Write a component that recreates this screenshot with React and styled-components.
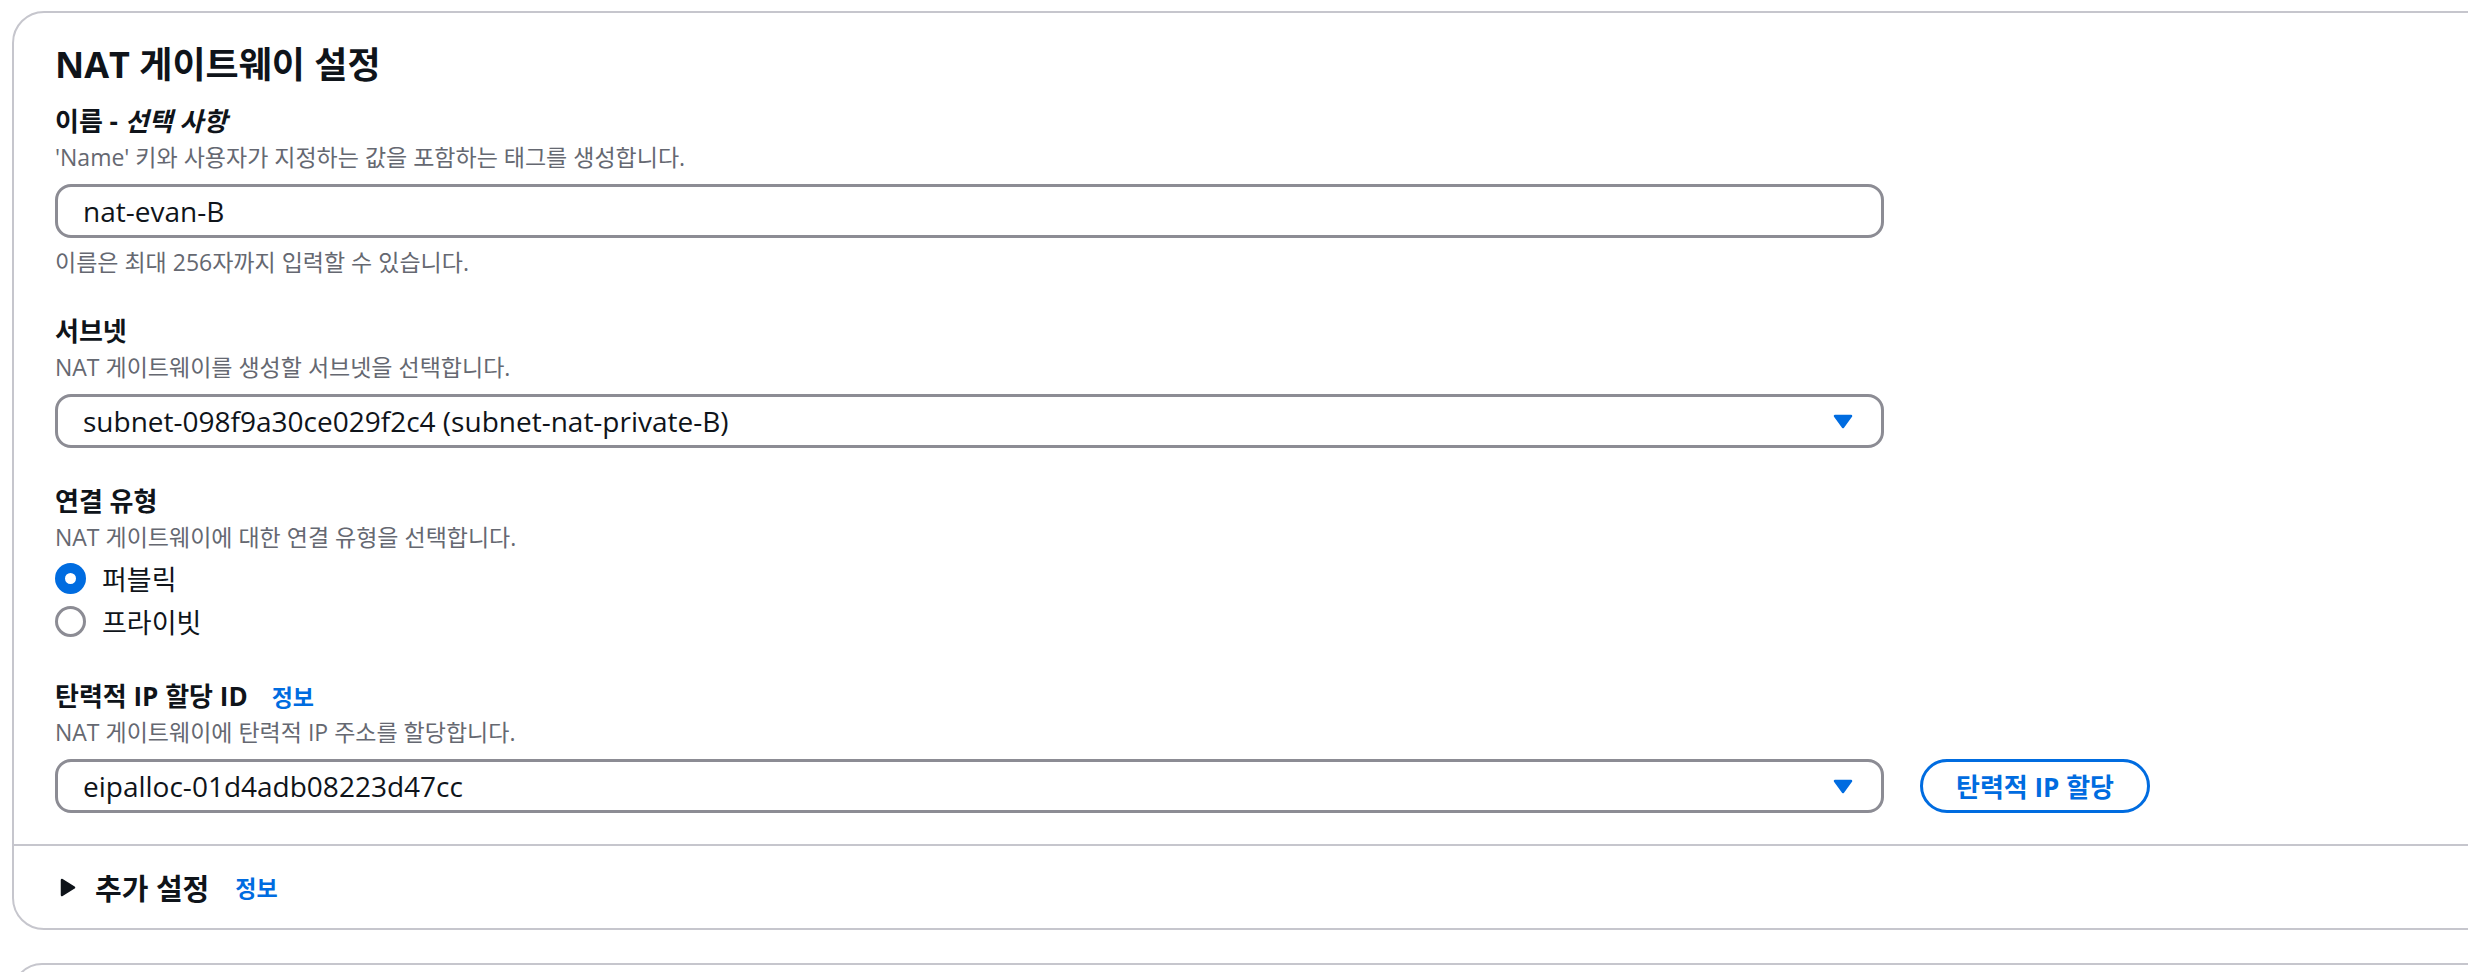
import React from 'react'
import styled, { createGlobalStyle } from 'styled-components'

const GlobalStyle = createGlobalStyle`
  html, body {
    margin: 0;
    padding: 0;
    background: #ffffff;
    overflow: hidden;
  }
  body {
    font-family: "Open Sans", "Noto Sans CJK KR", sans-serif;
    color: #0f141a;
  }
  * {
    box-sizing: border-box;
  }
`

const Page = styled.div`
  display: flex;
  flex-direction: column;
  gap: 33px;
  padding: 11px 0 0 12px;
`

const Card = styled.section`
  width: 2520px;
  min-height: ${props => props.$stub ? '60px' : 'auto'};
  border: 2px solid #c6c6cd;
  border-radius: 32px;
  background: #ffffff;
`

const Header = styled.header`
  padding: 32px 41px 0;
`

const Title = styled.h2`
  margin: 0;
  font-size: 36px;
  line-height: 40px;
  font-weight: 700;
`

const Body = styled.div`
  display: flex;
  flex-direction: column;
  gap: 33px;
  padding: 16px 41px 31px;
`

const Field = styled.div`
  display: flex;
  flex-direction: column;
`

const LabelRow = styled.div`
  display: flex;
  align-items: center;
  gap: 24px;
  height: 40px;
`

const Label = styled.span`
  font-size: 26px;
  line-height: 40px;
  font-weight: 700;
`

const Em = styled.em`
  font-style: italic;
`

const InfoLink = styled.a`
  font-size: 23px;
  font-weight: 700;
  color: #006ce0;
  text-decoration: none;
  cursor: pointer;
`

const Description = styled.div`
  font-size: 23px;
  line-height: 32px;
  color: #656871;
  margin-top: ${props => props.$gap || 0}px;
`

const ControlRow = styled.div`
  display: flex;
  align-items: center;
  gap: 36px;
  margin-top: 11px;
`

const FieldBox = styled.div`
  width: 1829px;
  height: 54px;
  display: flex;
  align-items: center;
  justify-content: space-between;
  border: 3px solid #8c8c94;
  border-radius: 16px;
  padding: 0 28px 0 25px;
  font-size: 28px;
  color: #0f141a;
  background: #ffffff;
`

const Caret = styled.svg`
  width: 20px;
  height: 15px;
  flex-shrink: 0;
`

const Button = styled.button`
  height: 54px;
  padding: 0 33px;
  border: 3px solid #006ce0;
  border-radius: 27px;
  background: #ffffff;
  color: #006ce0;
  font-family: inherit;
  font-size: 26px;
  font-weight: 700;
  cursor: pointer;
`

const RadioGroup = styled.div`
  display: flex;
  flex-direction: column;
  margin-top: 4px;
`

const RadioOption = styled.label`
  display: flex;
  align-items: center;
  gap: 16px;
  height: 43px;
  font-size: 27px;
`

const RadioCircle = styled.span`
  width: 31px;
  height: 31px;
  border-radius: 50%;
  background: #ffffff;
  border: ${props => props.$checked ? '10px solid #006ce0' : '3px solid #8c8c94'};
`

const Footer = styled.div`
  display: flex;
  align-items: center;
  height: 84px;
  border-top: 2px solid #c6c6cd;
  padding-left: 46px;
`

const Toggle = styled.svg`
  width: 16px;
  height: 19px;
  margin-right: 19px;
`

const FooterTitle = styled.span`
  font-size: 29px;
  font-weight: 700;
  margin-right: 26px;
`

const DownCaret = () => (
  <Caret viewBox="0 0 20 15">
    <polygon points="2,2 18,2 10,13" fill="#006ce0" stroke="#006ce0" strokeWidth="2.5" strokeLinejoin="round" />
  </Caret>
)

const App = () => {
  return (
    <>
      <GlobalStyle />
      <Page>
        <Card>
          <Header>
            <Title>NAT 게이트웨이 설정</Title>
          </Header>
          <Body>
            <Field>
              <LabelRow>
                <Label>이름 - <Em>선택 사항</Em></Label>
              </LabelRow>
              <Description>'Name' 키와 사용자가 지정하는 값을 포함하는 태그를 생성합니다.</Description>
              <ControlRow>
                <FieldBox>nat-evan-B</FieldBox>
              </ControlRow>
              <Description $gap={8}>이름은 최대 256자까지 입력할 수 있습니다.</Description>
            </Field>

            <Field>
              <LabelRow>
                <Label>서브넷</Label>
              </LabelRow>
              <Description>NAT 게이트웨이를 생성할 서브넷을 선택합니다.</Description>
              <ControlRow>
                <FieldBox>
                  subnet-098f9a30ce029f2c4 (subnet-nat-private-B)
                  <DownCaret />
                </FieldBox>
              </ControlRow>
            </Field>

            <Field>
              <LabelRow>
                <Label>연결 유형</Label>
              </LabelRow>
              <Description>NAT 게이트웨이에 대한 연결 유형을 선택합니다.</Description>
              <RadioGroup>
                <RadioOption>
                  <RadioCircle $checked />
                  퍼블릭
                </RadioOption>
                <RadioOption>
                  <RadioCircle />
                  프라이빗
                </RadioOption>
              </RadioGroup>
            </Field>

            <Field>
              <LabelRow>
                <Label>탄력적 IP 할당 ID</Label>
                <InfoLink>정보</InfoLink>
              </LabelRow>
              <Description>NAT 게이트웨이에 탄력적 IP 주소를 할당합니다.</Description>
              <ControlRow>
                <FieldBox>
                  eipalloc-01d4adb08223d47cc
                  <DownCaret />
                </FieldBox>
                <Button>탄력적 IP 할당</Button>
              </ControlRow>
            </Field>
          </Body>
          <Footer>
            <Toggle viewBox="0 0 16 19">
              <polygon points="2,2 14,9.5 2,17" fill="#0f141a" stroke="#0f141a" strokeWidth="2.5" strokeLinejoin="round" />
            </Toggle>
            <FooterTitle>추가 설정</FooterTitle>
            <InfoLink>정보</InfoLink>
          </Footer>
        </Card>
        <Card $stub />
      </Page>
    </>
  )
}

export default App
